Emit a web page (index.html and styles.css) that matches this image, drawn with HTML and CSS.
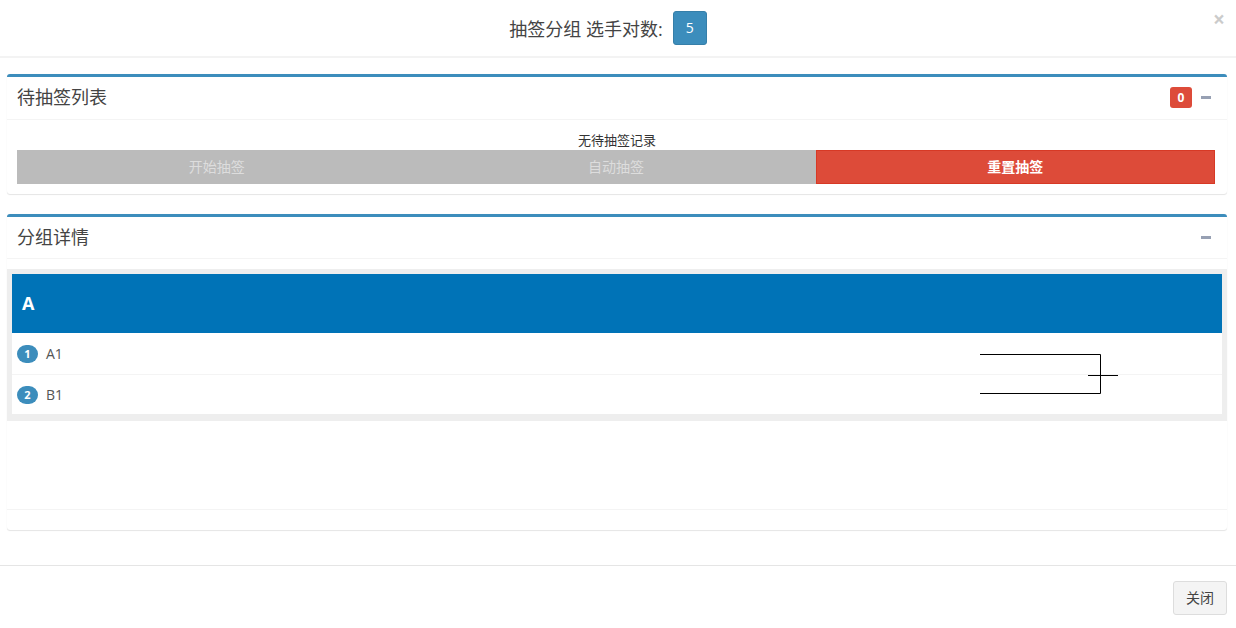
FILE: index.html
```html
<!DOCTYPE html>
<html lang="zh-CN">
<head>
    <meta charset="UTF-8">
    <title>抽签分组</title>
    <link rel="stylesheet" href="styles.css">
</head>
<body>
    <div class="modal">
        <div class="modal-header">
            <h4 class="modal-title">抽签分组 选手对数: <span class="btn btn-primary">5</span></h4>
            <span class="close">&times;</span>
        </div>
        <div class="modal-body">
            <div class="box">
                <div class="box-header">
                    <h3 class="box-title">待抽签列表</h3>
                    <div class="box-tools">
                        <span class="label-danger">0</span>
                        <span class="btn-tool"><i class="minus"></i></span>
                    </div>
                </div>
                <div class="box-body">
                    <div class="empty">无待抽签记录</div>
                    <div class="btn-row">
                        <span class="btn-draw disabled">开始抽签</span>
                        <span class="btn-draw disabled">自动抽签</span>
                        <span class="btn-draw danger">重置抽签</span>
                    </div>
                </div>
            </div>

            <div class="box">
                <div class="box-header">
                    <h3 class="box-title">分组详情</h3>
                    <div class="box-tools">
                        <span class="btn-tool"><i class="minus"></i></span>
                    </div>
                </div>
                <div class="box-body groups">
                    <div class="group">
                        <div class="group-name">A</div>
                        <ul class="group-list">
                            <li><span class="num">1</span>A1</li>
                            <li><span class="num">2</span>B1</li>
                            <svg class="bracket" width="140" height="41" viewBox="0 0 140 41">
                                <path d="M0 0.5H120.5V39.5H0M108 21.5H138" fill="none" stroke="#000" stroke-width="1"/>
                            </svg>
                        </ul>
                    </div>
                </div>
                <div class="box-footer"></div>
            </div>
        </div>
        <div class="modal-footer">
            <span class="btn btn-default">关闭</span>
        </div>
    </div>
</body>
</html>
```

FILE: styles.css
```css
body {
    margin: 0;
    font-family: "Open Sans", "Noto Sans CJK SC", sans-serif;
    font-size: 14px;
    color: #333;
    background: #fff;
}
.modal-header {
    position: relative;
    height: 56px;
    display: flex;
    align-items: center;
    justify-content: center;
    padding-right: 20px;
    border-bottom: 2px solid #f3f3f3;
}
.modal-title {
    margin: 0;
    font-size: 18px;
    font-weight: normal;
    color: #444;
    display: flex;
    align-items: center;
}
.modal-title .btn {
    margin-left: 10px;
}
.close {
    position: absolute;
    right: 11px;
    top: 5px;
    font-size: 21px;
    font-weight: bold;
    color: #000;
    opacity: 0.2;
}
.btn {
    display: inline-block;
    padding: 6px 12px;
    font-size: 14px;
    line-height: 20px;
    border: 1px solid transparent;
    border-radius: 3px;
}
.btn-primary {
    background-color: #3c8dbc;
    border-color: #367fa9;
    color: #fff;
    width: 34px;
    padding: 6px 0;
    text-align: center;
    box-sizing: border-box;
}
.btn-default {
    background-color: #f4f4f4;
    border-color: #ddd;
    color: #444;
}
.modal-body {
    padding: 16px 9px 15px 7px;
}
.box {
    background: #fff;
    border-top: 3px solid #3c8dbc;
    border-radius: 3px;
    margin-bottom: 20px;
    box-shadow: 0 1px 1px rgba(0, 0, 0, 0.1), 0 0 1px rgba(0, 0, 0, 0.06);
}
.box-header {
    display: flex;
    align-items: center;
    justify-content: space-between;
    padding: 10px;
    border-bottom: 1px solid #f4f4f4;
}
.box-title {
    margin: 0;
    font-size: 18px;
    line-height: 21.6px;
    font-weight: normal;
    color: #444;
}
.box-tools {
    display: flex;
    align-items: center;
    gap: 9px;
    padding-right: 6px;
}
.label-danger {
    background: #dd4b39;
    color: #fff;
    font-size: 12px;
    font-weight: bold;
    width: 22px;
    height: 21px;
    line-height: 21px;
    text-align: center;
    border-radius: 3px;
}
.btn-tool {
    display: flex;
    align-items: center;
    width: 10px;
    height: 10px;
}
.minus {
    display: block;
    width: 10px;
    height: 3px;
    background: #97a0b3;
}
.box-body {
    padding: 10px;
}
.empty {
    text-align: center;
    font-size: 13px;
    line-height: 20px;
    color: #333;
}
.btn-row {
    display: flex;
    margin-right: 2px;
}
.btn-draw {
    width: 33.333%;
    text-align: center;
    height: 34px;
    line-height: 34px;
    font-size: 14px;
    box-sizing: border-box;
}
.btn-draw.disabled {
    background: #bbb;
    color: #ddd;
}
.btn-draw.danger {
    background: #dd4b39;
    border: 1px solid #d73925;
    line-height: 32px;
    color: #fff;
    font-weight: 600;
}
.groups {
    padding: 10px 0;
    min-height: 250px;
    box-sizing: border-box;
}
.group {
    background: #eee;
    padding: 5px 5px 7px;
}
.group-name {
    background: #0073b7;
    color: #fff;
    font-size: 18px;
    font-weight: bold;
    height: 59px;
    line-height: 59px;
    padding-left: 10px;
}
.group-list {
    position: relative;
    list-style: none;
    margin: 0;
    padding: 0;
    background: #fff;
}
.group-list li {
    display: flex;
    align-items: center;
    height: 41px;
    padding-left: 5px;
    color: #555;
    font-size: 14px;
    border-bottom: 1px solid #f4f4f4;
}
.group-list li:last-of-type {
    border-bottom: none;
    height: 39px;
}
.num {
    display: inline-block;
    width: 21px;
    height: 18px;
    line-height: 18px;
    border-radius: 10px;
    background: #3c8dbc;
    color: #fff;
    font-size: 11px;
    font-weight: bold;
    text-align: center;
    margin-right: 8px;
}
.bracket {
    position: absolute;
    left: 968px;
    top: 21px;
}
.box-footer {
    border-top: 1px solid #f4f4f4;
    padding: 10px;
}
.modal-footer {
    border-top: 1px solid #e5e5e5;
    padding: 15px 9px 15px 15px;
    text-align: right;
}
```
